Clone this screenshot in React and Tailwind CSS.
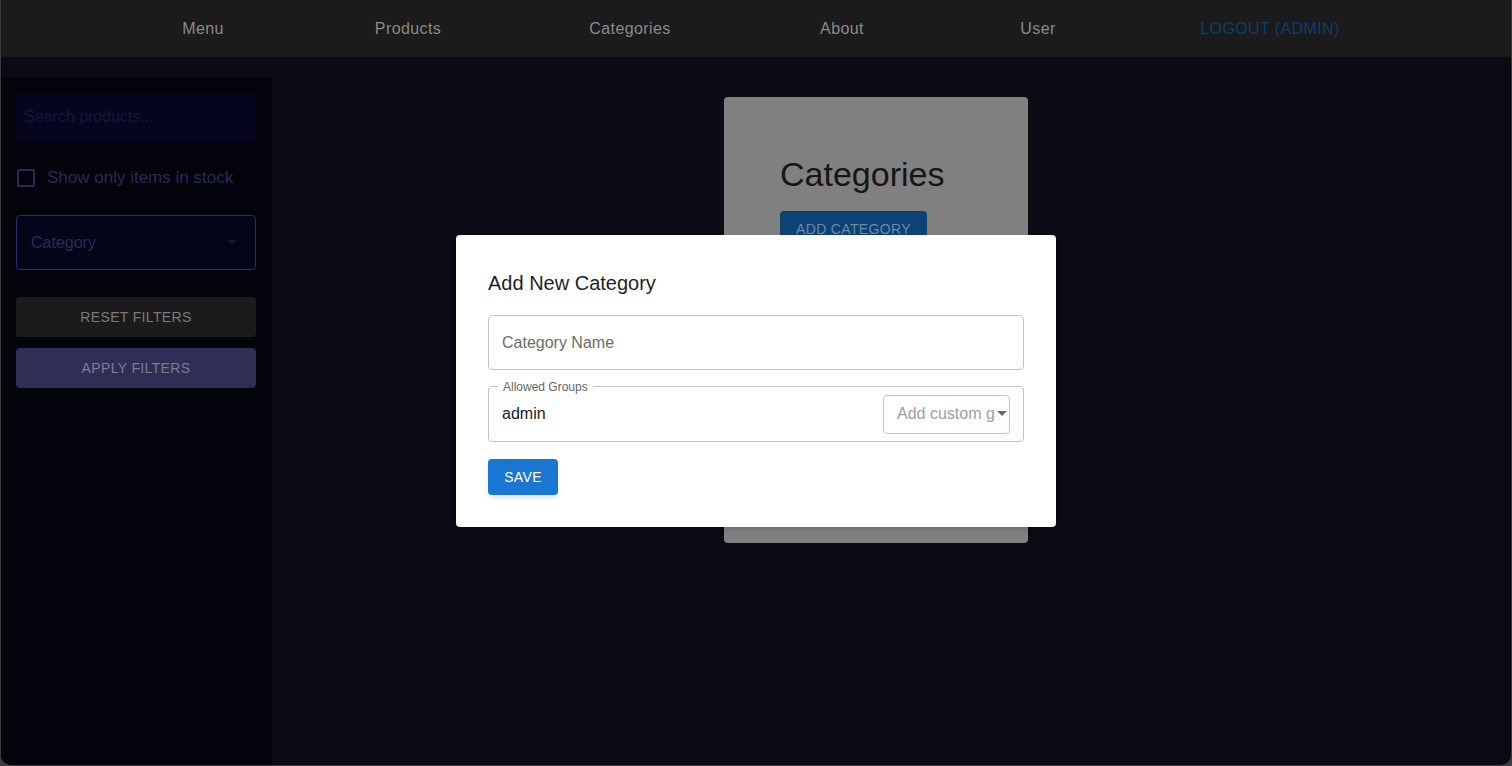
const navItems = [
    { label: "Menu", w: "w-[204px]" },
    { label: "Products", w: "w-[206px]" },
    { label: "Categories", w: "w-[238px]" },
    { label: "About", w: "w-[186px]" },
    { label: "User", w: "w-[206px]" },
];

const Sidebar = () => (
    <aside className="w-[271px] shrink-0 bg-[#03030c] pl-[15px] pr-4 pt-4 flex flex-col">
        <div className="h-12 rounded bg-[#05051d] flex items-center px-2 text-[16px] text-[#15163a]">
            Search products...
        </div>

        <label className="mt-7 h-[18px] flex items-center gap-3 text-[17px] text-[#2a2954]">
            <span className="w-[18px] h-[18px] ml-[1px] rounded-[2px] border-2 border-[#2b2a55]" />
            Show only items in stock
        </label>

        <div className="mt-7 h-[55px] rounded border border-[#2c2a68] bg-[#05051a] flex items-center justify-between px-[14px] text-[16px] text-[#2b2a58]">
            <span>Category</span>
            <svg width="10" height="6" viewBox="0 0 10 6" className="mr-1">
                <path d="M0 0h10L5 5z" fill="#141432" />
            </svg>
        </div>

        <button className="mt-[27px] h-10 rounded bg-[#1b1b1b] text-[14px] tracking-wide text-[#7a7a7a]">
            RESET FILTERS
        </button>
        <button className="mt-[11px] h-10 rounded bg-[#2f2f55] text-[14px] tracking-wide text-[#7c7c92]">
            APPLY FILTERS
        </button>
    </aside>
);

const CategoryDialog = () => (
    <div className="absolute inset-0 flex items-center justify-center pb-[3px]">
        <div className="w-[600px] bg-white rounded shadow-md p-8">
            <h2 className="text-[20px] leading-8 text-[#1f1f1f]">Add New Category</h2>

            <div className="mt-4 h-[55px] rounded border border-[#c4c4c4] flex items-center px-[13px] text-[16px] text-[#6b6b6b]">
                Category Name
            </div>

            <div className="relative mt-4 h-[56px] rounded border border-[#c4c4c4] flex items-center justify-between pl-[13px] pr-[13px]">
                <span className="absolute -top-[9px] left-[9px] bg-white px-[5px] text-[12px] text-[#666]">
                    Allowed Groups
                </span>
                <span className="text-[16px] text-[#1a1a1a]">admin</span>
                <div className="w-[127px] h-[39px] rounded border border-[#c4c4c4] flex items-center justify-between pl-[13px] pr-[2px]">
                    <span className="text-[16px] text-[#9e9e9e] whitespace-nowrap">Add custom g</span>
                    <svg width="10" height="6" viewBox="0 0 10 6" className="shrink-0">
                        <path d="M0 0h10L5 5z" fill="#6b6b6b" />
                    </svg>
                </div>
            </div>

            <button className="mt-[17px] h-9 w-[70px] rounded bg-[#1976d2] text-white text-[14px] tracking-wide shadow-md">
                SAVE
            </button>
        </div>
    </div>
);

export default function App() {
    return (
        <div className="h-[766px] w-full bg-[#3c3c3c] font-['Liberation_Sans',Arial,sans-serif]">
            <div className="relative h-[765px] ml-px mr-px overflow-hidden rounded-b-[10px] bg-[#0a0b14] flex flex-col">
                <nav className="h-[57px] shrink-0 bg-[#1b1b1b] flex items-center pl-[100px] text-[16px] tracking-wide text-[#8a8a8a]">
                    {navItems.map((item) => (
                        <span key={item.label} className={`${item.w} text-center`}>{item.label}</span>
                    ))}
                    <span className="w-[258px] text-center text-[#0e3d6e]">LOGOUT (ADMIN)</span>
                </nav>

                <div className="flex flex-1 mt-5">
                    <Sidebar />
                    <main className="flex-1 pl-[452px] pt-5">
                        <div className="w-[304px] h-[446px] rounded bg-[#808080] px-14 pt-[57px]">
                            <h1 className="text-[34px] leading-[40px] text-[#161616]">Categories</h1>
                            <button className="mt-[17px] h-9 px-4 rounded bg-[#0e4174] text-[14px] tracking-wide text-[#6b8aa8]">
                                ADD CATEGORY
                            </button>
                        </div>
                    </main>
                </div>

                <CategoryDialog />
            </div>
        </div>
    );
}
